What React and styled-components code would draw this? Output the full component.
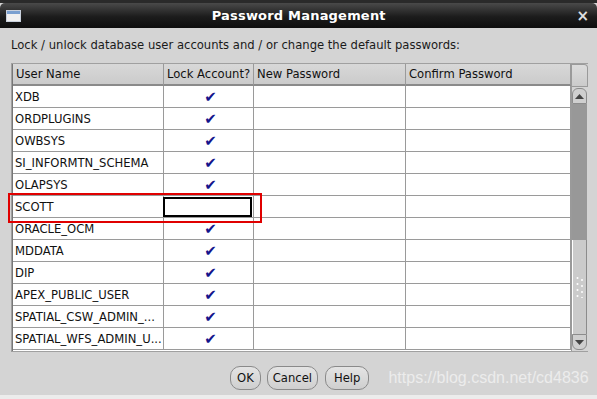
import React from 'react';
import styled, { createGlobalStyle } from 'styled-components';

const Global = createGlobalStyle`
  html, body { margin: 0; padding: 0; background: #d4d4d4; }
  body { font-family: "DejaVu Sans", "Liberation Sans", sans-serif; }
`;

const Dialog = styled.div`
  width: 597px;
  height: 399px;
  display: flex;
  flex-direction: column;
  background: #d4d4d4;
  overflow: hidden;
`;

const TopStrip = styled.div`
  height: 3px;
  background: #2a2a2a;
`;

const TitleBar = styled.div`
  height: 25px;
  display: flex;
  align-items: center;
  padding: 0 8px 0 6px;
  background: linear-gradient(#4a4a4a, #1c1c1c 55%, #0e0e0e);
  border-radius: 5px 5px 0 0;
  color: #fff;
`;

const WinIcon = styled.div`
  width: 15px;
  height: 12px;
  background: linear-gradient(#7aa0d0 0 3px, #f0f0f0 3px);
  border: 1px solid #c8d0dc;
  box-sizing: border-box;
`;

const Title = styled.div`
  flex: 1;
  text-align: center;
  font-weight: bold;
  font-size: 13px;
  letter-spacing: 0.2px;
`;

const Close = styled.div`
  font-size: 15px;
  font-weight: bold;
  color: #e0e0e0;
`;

const Body = styled.div`
  flex: 1;
  display: flex;
  flex-direction: column;
  padding: 9px 10px 0 11px;
`;

const Label = styled.div`
  font-size: 11.6px;
  color: #1a1a1a;
  height: 16px;
  line-height: 16px;
  margin-bottom: 10px;
`;

const TableBox = styled.div`
  display: flex;
  width: 576px;
  height: 287px;
  border: 1px solid #a0a0a0;
  border-right: none;
  background: #fff;
`;

const Grid = styled.div`
  width: 558px;
  display: grid;
  grid-template-columns: 151px 90px 152px 165px;
  grid-auto-rows: 22px;
  border-left: 1px solid #777;
`;

const Head = styled.div`
  background: linear-gradient(#d8d8d8, #cbcbcb);
  border-right: 1px solid #9a9a9a;
  border-bottom: 2px solid #8a8a8a;
  font-size: 11.6px;
  color: #111;
  padding-left: 3px;
  display: flex;
  align-items: center;
  box-sizing: border-box;
  white-space: nowrap;
  overflow: hidden;
`;

const Cell = styled.div`
  position: relative;
  border-right: 1px solid #9a9a9a;
  border-bottom: 1px solid #9a9a9a;
  font-size: 11.6px;
  color: #111;
  padding-left: 2px;
  display: flex;
  align-items: center;
  justify-content: ${p => (p.center ? 'center' : 'flex-start')};
  box-sizing: border-box;
  white-space: nowrap;
  overflow: ${p => (p.editing ? 'visible' : 'hidden')};
`;

const Check = styled.span`
  color: #14148c;
  font-size: 15px;
  line-height: 1;
  margin-top: 2px;
  margin-left: 2px;
`;

const EditBox = styled.div`
  position: absolute;
  left: -1px;
  top: 1px;
  width: 89px;
  height: 20px;
  border: 2px solid #000;
  box-sizing: border-box;
  background: #fff;
`;

const Highlight = styled.div`
  position: absolute;
  left: -5px;
  top: -3px;
  width: 254px;
  height: 30px;
  border: 2px solid #e00000;
  box-sizing: border-box;
  pointer-events: none;
  z-index: 2;
`;

const Scroll = styled.div`
  width: 17px;
  display: flex;
  flex-direction: column;
  background: #d4d4d4;
  border-left: 1px solid #9a9a9a;
`;

const Corner = styled.div`
  height: 21px;
  background: linear-gradient(#dcdcdc, #cbcbcb);
  border: 1px solid #9a9a9a;
  border-left: none;
  border-radius: 0 4px 0 0;
`;

const ArrowBtn = styled.div`
  height: 14px;
  display: flex;
  align-items: center;
  justify-content: center;
  background: #cfcfcf;
  border: 1px solid #8c8c8c;
  border-radius: ${p => (p.down ? '0 0 6px 6px' : '6px 6px 0 0')};
  margin: ${p => (p.down ? '0 1px 1px 0' : '1px 1px 0 0')};
`;

const Track = styled.div`
  flex: 0 0 136px;
  background: #989898;
  margin-right: 1px;
`;

const Thumb = styled.div`
  flex: 1;
  background: #cbcbcb;
  border-left: 1px solid #fff;
  border-right: 1px solid #8c8c8c;
  margin-right: 1px;
  display: flex;
  align-items: center;
  justify-content: center;
`;

const Footer = styled.div`
  flex: 1;
  display: flex;
  align-items: center;
  padding-left: 219px;
  padding-top: 10px;
  padding-bottom: 2px;
`;

const Button = styled.button`
  font-family: "DejaVu Sans", "Liberation Sans", sans-serif;
  font-size: 11.6px;
  color: #111;
  height: 24px;
  padding: 0 ${p => p.pad}px;
  background: linear-gradient(#e4e4e4, #cfcfcf);
  border: 1px solid #8a8a8a;
  border-radius: 10px;
  margin-right: ${p => p.gap || 0}px;
`;

const Watermark = styled.div`
  font-family: "Liberation Sans", Arial, sans-serif;
  font-size: 16px;
  color: #ececec;
`;

const BottomStrip = styled.div`
  height: 4px;
  background: #ececec;
`;

const users = [
  'XDB', 'ORDPLUGINS', 'OWBSYS', 'SI_INFORMTN_SCHEMA', 'OLAPSYS', 'SCOTT',
  'ORACLE_OCM', 'MDDATA', 'DIP', 'APEX_PUBLIC_USER',
  'SPATIAL_CSW_ADMIN_...', 'SPATIAL_WFS_ADMIN_U...',
];

const Tri = ({ down }) => (
  <svg width="9" height="5" viewBox="0 0 9 5">
    <path d={down ? 'M0 0 L9 0 L4.5 5 Z' : 'M0 5 L9 5 L4.5 0 Z'} fill="#444" />
  </svg>
);

const Grip = () => (
  <svg width="8" height="22" viewBox="0 0 8 22">
    {[0, 1, 2, 3].map(i => (
      <g key={i}>
        <circle cx="1.5" cy={2 + i * 6} r="1" fill="#fff" />
        <circle cx="6" cy={4 + i * 6} r="1" fill="#fff" />
      </g>
    ))}
  </svg>
);

export default function App() {
  return (
    <Dialog>
      <Global />
      <TopStrip />
      <TitleBar>
        <WinIcon />
        <Title>Password Management</Title>
        <Close>×</Close>
      </TitleBar>
      <Body>
        <Label>Lock / unlock database user accounts and / or change the default passwords:</Label>
        <TableBox>
          <Grid>
            <Head>User Name</Head>
            <Head>Lock Account?</Head>
            <Head>New Password</Head>
            <Head>Confirm Password</Head>
            {users.map(u => (
              <React.Fragment key={u}>
                <Cell editing={u === 'SCOTT'}>
                  {u === 'SCOTT' && <Highlight />}
                  {u}
                </Cell>
                <Cell center editing={u === 'SCOTT'}>
                  {u === 'SCOTT' ? <EditBox /> : <Check>✔</Check>}
                </Cell>
                <Cell />
                <Cell />
              </React.Fragment>
            ))}
          </Grid>
          <Scroll>
            <Corner />
            <ArrowBtn><Tri /></ArrowBtn>
            <Track />
            <Thumb><Grip /></Thumb>
            <ArrowBtn down><Tri down /></ArrowBtn>
          </Scroll>
        </TableBox>
        <Footer>
          <Button pad={6} gap={6}>OK</Button>
          <Button pad={5} gap={7}>Cancel</Button>
          <Button pad={8} gap={19}>Help</Button>
          <Watermark>https://blog.csdn.net/cd4836</Watermark>
        </Footer>
      </Body>
      <BottomStrip />
    </Dialog>
  );
}
